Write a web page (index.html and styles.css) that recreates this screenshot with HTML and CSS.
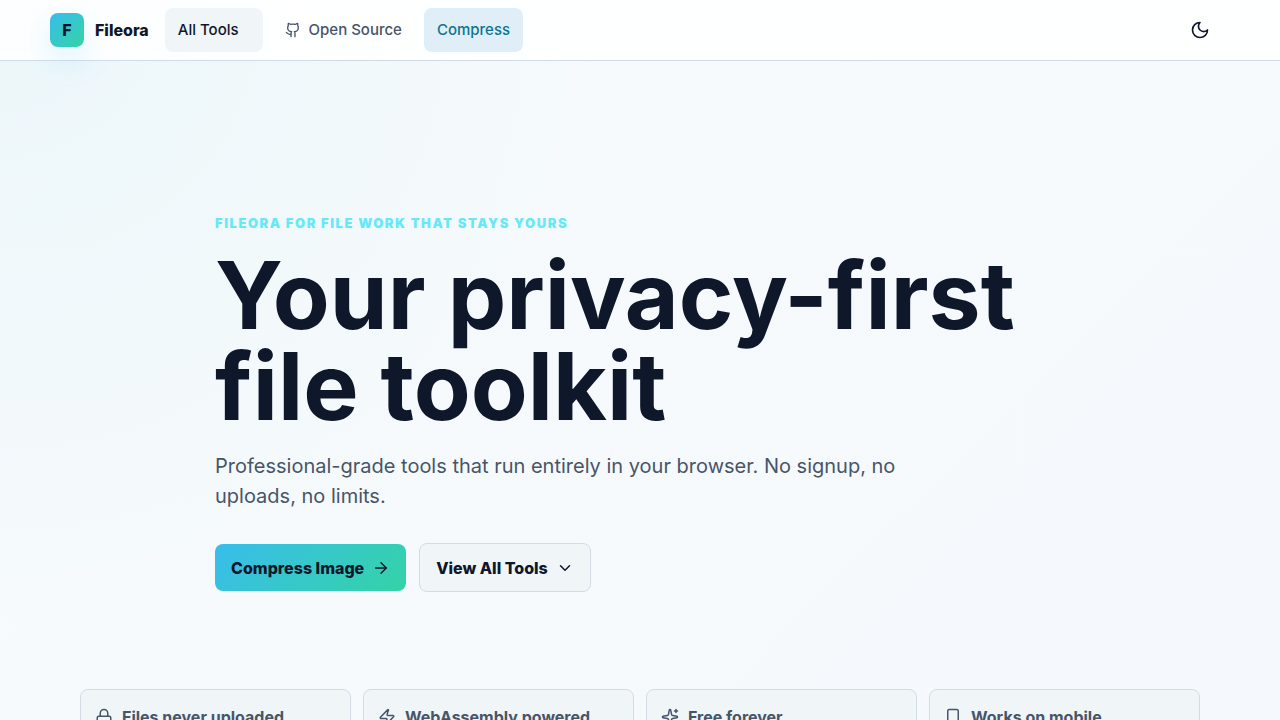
FILE: index.html
```html
<!DOCTYPE html>
<html lang="en">
<head>
  <meta charset="UTF-8">
  <meta name="viewport" content="width=device-width, initial-scale=1.0">
  <title>Fileora</title>
  <link rel="stylesheet" href="styles.css">
</head>
<body>
  <header class="site-header">
    <div class="header-inner">
      <a class="brand" href="#">
        <span class="brand-mark">F</span>
        <span>Fileora</span>
      </a>
      <nav class="nav">
        <button class="nav-item nav-menu" type="button">All Tools</button>
        <a class="nav-item nav-link" href="#">
          <svg class="icon" viewBox="0 0 24 24"><path d="M15 22v-4a4.8 4.8 0 0 0-1-3.5c3 0 6-2 6-5.5.08-1.25-.27-2.48-1-3.5.28-1.15.28-2.35 0-3.5 0 0-1 0-3 1.5-2.64-.5-5.36-.5-8 0C6 2 5 2 5 2c-.3 1.15-.3 2.35 0 3.5A5.403 5.403 0 0 0 4 9c0 3.5 3 5.5 6 5.5-.39.49-.68 1.05-.85 1.65-.17.6-.22 1.23-.15 1.85v4"/><path d="M9 18c-4.51 2-5-2-7-2"/></svg>
          Open Source
        </a>
        <a class="nav-item nav-active" href="#">Compress</a>
      </nav>
      <button class="theme-toggle" type="button" aria-label="Toggle theme">
        <svg class="icon icon-lg" viewBox="0 0 24 24"><path d="M12 3a6 6 0 0 0 9 9 9 9 0 1 1-9-9Z"/></svg>
      </button>
    </div>
  </header>

  <main>
    <section class="hero">
      <p class="eyebrow">Fileora for file work that stays yours</p>
      <h1>Your privacy-first file toolkit</h1>
      <p class="lead">Professional-grade tools that run entirely in your browser. No signup, no uploads, no limits.</p>
      <div class="actions">
        <a class="btn btn-primary" href="#">
          Compress Image
          <svg class="icon icon-md" viewBox="0 0 24 24"><path d="M5 12h14"/><path d="m12 5 7 7-7 7"/></svg>
        </a>
        <a class="btn btn-secondary" href="#features">
          View All Tools
          <svg class="icon icon-md" viewBox="0 0 24 24"><path d="m6 9 6 6 6-6"/></svg>
        </a>
      </div>
    </section>

    <section class="features" id="features">
      <div class="feature">
        <svg class="icon icon-md" viewBox="0 0 24 24"><rect width="18" height="11" x="3" y="11" rx="2"/><path d="M7 11V7a5 5 0 0 1 10 0v4"/></svg>
        Files never uploaded
      </div>
      <div class="feature">
        <svg class="icon icon-md" viewBox="0 0 24 24"><path d="M4 14a1 1 0 0 1-.78-1.63l9.9-10.2a.5.5 0 0 1 .86.46l-1.92 6.02A1 1 0 0 0 13 10h7a1 1 0 0 1 .78 1.63l-9.9 10.2a.5.5 0 0 1-.86-.46l1.92-6.02A1 1 0 0 0 11 14z"/></svg>
        WebAssembly powered
      </div>
      <div class="feature">
        <svg class="icon icon-md" viewBox="0 0 24 24"><path d="M11.017 2.814a1 1 0 0 1 1.966 0l1.051 5.558a2 2 0 0 0 1.594 1.594l5.558 1.051a1 1 0 0 1 0 1.966l-5.558 1.051a2 2 0 0 0-1.594 1.594l-1.051 5.558a1 1 0 0 1-1.966 0l-1.051-5.558a2 2 0 0 0-1.594-1.594l-5.558-1.051a1 1 0 0 1 0-1.966l5.558-1.051a2 2 0 0 0 1.594-1.594z"/><path d="M20 2v4"/><path d="M22 4h-4"/><circle cx="4" cy="20" r="2"/></svg>
        Free forever
      </div>
      <div class="feature">
        <svg class="icon icon-md" viewBox="0 0 24 24"><rect width="14" height="20" x="5" y="2" rx="2"/><path d="M12 18h.01"/></svg>
        Works on mobile
      </div>
    </section>
  </main>
</body>
</html>
```

FILE: styles.css
```css
* {
  box-sizing: border-box;
}

body {
  margin: 0;
  font-family: "Inter", "Liberation Sans", sans-serif;
  font-size: 16px;
  line-height: 24px;
  color: #0f172a;
  background:
    radial-gradient(circle at top left, rgba(55, 180, 190, 0.06), transparent 640px),
    linear-gradient(135deg, #f7fbfd, #f5f8fc);
}

a {
  color: inherit;
  text-decoration: none;
}

button {
  font: inherit;
  color: inherit;
  border: 0;
  cursor: pointer;
}

.icon {
  width: 16px;
  height: 16px;
  flex: none;
  fill: none;
  stroke: currentColor;
  stroke-width: 2;
  stroke-linecap: round;
  stroke-linejoin: round;
}

.icon-md {
  width: 18px;
  height: 18px;
}

.icon-lg {
  width: 20px;
  height: 20px;
}

/* header */
.site-header {
  background: rgba(255, 255, 255, 0.88);
  border-bottom: 1px solid #d3dce4;
}

.header-inner {
  display: flex;
  align-items: center;
  gap: 16px;
  max-width: 1180px;
  min-height: 60px;
  margin: 0 auto;
}

.brand {
  display: flex;
  align-items: center;
  gap: 11px;
  font-weight: 800;
}

.brand-mark {
  display: grid;
  place-items: center;
  width: 34px;
  height: 34px;
  border-radius: 8px;
  background: linear-gradient(135deg, #38bdec, #34d3a6);
  box-shadow: 0 12px 30px rgba(56, 189, 248, 0.18);
}

.nav {
  display: flex;
  align-items: center;
  gap: 9px;
}

.nav-item {
  display: flex;
  align-items: center;
  gap: 8px;
  min-height: 44px;
  padding: 0 13px;
  border-radius: 8px;
  font-size: 15px;
  font-weight: 550;
}

.nav-menu {
  padding-right: 24px;
  background: #f0f5f8;
}

.nav-link {
  color: #475569;
}

.nav-active {
  color: #0e7490;
  background: #dfeef7;
}

.theme-toggle {
  display: grid;
  place-items: center;
  width: 44px;
  height: 44px;
  margin: 0 8px 0 auto;
  padding: 0;
  border-radius: 8px;
  background: transparent;
}

/* hero */
.hero {
  max-width: 850px;
  margin: 0 auto;
  padding: 150px 0 97px;
}

.eyebrow {
  margin: 0 0 15px;
  font-size: 13px;
  font-weight: 900;
  letter-spacing: 0.12em;
  text-transform: uppercase;
  color: #67e8f9;
}

h1 {
  margin: 0;
  font-size: 93px;
  font-weight: 700;
  line-height: 91px;
}

.lead {
  max-width: 700px;
  margin: 19px 0 0;
  font-size: 20px;
  line-height: 30px;
  color: #475569;
}

.actions {
  display: flex;
  flex-wrap: wrap;
  align-items: center;
  gap: 13px;
  margin-top: 32px;
}

.btn {
  display: inline-flex;
  align-items: center;
  gap: 8px;
  min-height: 47px;
  padding: 0 16px;
  border-radius: 8px;
  font-weight: 800;
}

.btn-primary {
  background: linear-gradient(135deg, #38bdec, #34d3a6);
}

.btn-secondary {
  min-height: 49px;
  background: #f0f5f8;
  border: 1px solid #d3dce4;
}

/* feature cards */
.features {
  display: grid;
  grid-template-columns: repeat(auto-fit, minmax(240px, 1fr));
  gap: 12px;
  max-width: 1120px;
  margin: 0 auto;
  padding-bottom: 64px;
}

.feature {
  display: flex;
  align-items: center;
  gap: 9px;
  min-height: 56px;
  padding: 14px;
  border: 1px solid #d3dce4;
  border-radius: 8px;
  font-weight: 700;
  color: #475569;
  background: #f0f5f8;
}
```
